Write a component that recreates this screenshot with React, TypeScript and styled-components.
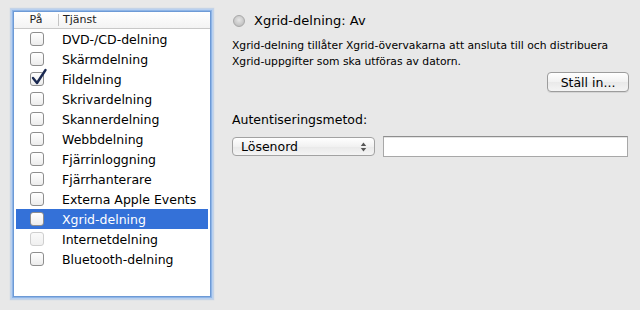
import styled, { createGlobalStyle } from 'styled-components'

type Service = {
  name: string,
  checked?: boolean,
  disabled?: boolean,
}

const services: Array<Service> = [
  { name: 'DVD-/CD-delning' },
  { name: 'Skärmdelning' },
  { name: 'Fildelning', checked: true },
  { name: 'Skrivardelning' },
  { name: 'Skannerdelning' },
  { name: 'Webbdelning' },
  { name: 'Fjärrinloggning' },
  { name: 'Fjärrhanterare' },
  { name: 'Externa Apple Events' },
  { name: 'Xgrid-delning' },
  { name: 'Internetdelning', disabled: true },
  { name: 'Bluetooth-delning' },
]

const selectedIndex = 9

const GlobalStyle = createGlobalStyle`
  html, body {
    margin: 0;
    padding: 0;
    background: #e8e8e8;
    font-family: "DejaVu Sans", "Liberation Sans", sans-serif;
    color: #000;
  }
`

const Check = ({ checked, disabled }: { checked?: boolean, disabled?: boolean }) => (
  <CheckBox $disabled={disabled}>
    {checked && (
      <svg width="18" height="19" viewBox="0 0 18 19">
        <path d="M3 10 L7 15 L15.5 2" fill="none" stroke="#1b2a52" strokeWidth="2.4" strokeLinecap="round" strokeLinejoin="round" />
      </svg>
    )}
  </CheckBox>
)

export default function App() {
  return (
    <>
      <GlobalStyle />
      <Page>
        <ListBox>
          <Header>
            <HeaderCell $width={44} $center>På</HeaderCell>
            <HeaderCell>Tjänst</HeaderCell>
          </Header>
          {services.map(({ name, checked, disabled }, i) => (
            <Row key={name} $selected={i === selectedIndex}>
              <CheckCell>
                <Check checked={checked} disabled={disabled} />
              </CheckCell>
              <Name>{name}</Name>
            </Row>
          ))}
        </ListBox>

        <Detail>
          <StatusLine>
            <StatusDot />
            <StatusText>Xgrid-delning: Av</StatusText>
          </StatusLine>

          <Description>
            Xgrid-delning tillåter Xgrid-övervakarna att ansluta till och distribuera
            <br />
            Xgrid-uppgifter som ska utföras av datorn.
          </Description>

          <ButtonRow>
            <PushButton>Ställ in...</PushButton>
          </ButtonRow>

          <Label>Autentiseringsmetod:</Label>
          <AuthRow>
            <Popup>
              <span>Lösenord</span>
              <svg width="7" height="10" viewBox="0 0 7 10">
                <path d="M3.5 0.5 L6.2 4 L0.8 4 Z" fill="#555" />
                <path d="M3.5 9.5 L6.2 6 L0.8 6 Z" fill="#555" />
              </svg>
            </Popup>
            <TextField />
          </AuthRow>
        </Detail>
      </Page>
    </>
  )
}

const Page = styled.div`
  display: flex;
  width: 640px;
  height: 310px;
  padding: 11px 0 0 13px;
  box-sizing: border-box;
  gap: 21px;
`

const ListBox = styled.div`
  width: 198px;
  height: 286px;
  background: #fff;
  border: 1px solid #6d9ad6;
  box-shadow: 0 0 0 1px #8fb5e6, 0 0 0 2px #b8d0f0, 0 0 1px 3px rgba(160, 190, 230, 0.5);
  box-sizing: border-box;
  overflow: hidden;
`

const Header = styled.div`
  display: flex;
  height: 16px;
  align-items: center;
  background: linear-gradient(#ffffff, #f3f3f3);
  border-bottom: 1px solid #c8c8c8;
  font-size: 11px;
  color: #222;
`

const HeaderCell = styled.div<{ $width?: number, $center?: boolean }>`
  ${({ $width }) => ($width ? `width: ${$width}px;` : 'flex: 1;')}
  ${({ $center }) => ($center ? 'text-align: center; border-right: 1px solid #c4c4c4;' : 'padding-left: 4px;')}
  line-height: 12px;
`

const Row = styled.div<{ $selected?: boolean }>`
  display: flex;
  align-items: center;
  height: 20px;
  margin: 0 2px;
  background: ${({ $selected }) => ($selected ? '#3471d8' : 'transparent')};
  color: ${({ $selected }) => ($selected ? '#fff' : '#000')};
`

const CheckCell = styled.div`
  width: 44px;
  display: flex;
  justify-content: center;
  padding-right: 2px;
  box-sizing: border-box;
`

const CheckBox = styled.div<{ $disabled?: boolean }>`
  position: relative;
  width: 14px;
  height: 14px;
  box-sizing: border-box;
  border-radius: 3px;
  border: 1px solid ${({ $disabled }) => ($disabled ? '#cfcfcf' : '#8e8e8e')};
  background: ${({ $disabled }) => ($disabled ? 'linear-gradient(#fafafa, #f0f0f0)' : 'linear-gradient(#ffffff, #ececec)')};

  svg {
    position: absolute;
    left: -1px;
    top: -5px;
  }
`

const Name = styled.div`
  padding-left: 2px;
  font-size: 12.5px;
`

const Detail = styled.div`
  display: flex;
  flex-direction: column;
  width: 397px;
  padding-top: 2px;
`

const StatusLine = styled.div`
  display: flex;
  align-items: center;
  gap: 9px;
  padding-left: 1px;
`

const StatusDot = styled.div`
  width: 10px;
  height: 10px;
  border-radius: 50%;
  border: 1px solid #a8a8a8;
  background: radial-gradient(circle at 50% 40%, #e6e6e6, #b4b4b4);
`

const StatusText = styled.div`
  font-size: 13px;
`

const Description = styled.div`
  margin-top: 10px;
  font-size: 10.75px;
  line-height: 16px;
`

const ButtonRow = styled.div`
  display: flex;
  justify-content: flex-end;
  margin-top: 2px;
`

const PushButton = styled.div`
  width: 82px;
  height: 20px;
  box-sizing: border-box;
  border: 1px solid #9c9c9c;
  border-radius: 4px;
  background: linear-gradient(#ffffff, #f1f1f1 50%, #e9e9e9 51%, #f4f4f4);
  box-shadow: 0 1px 0 rgba(0, 0, 0, 0.08);
  font-size: 12.5px;
  display: flex;
  align-items: center;
  justify-content: center;
`

const Label = styled.div`
  margin-top: 20px;
  font-size: 12.5px;
`

const AuthRow = styled.div`
  display: flex;
  align-items: center;
  gap: 8px;
  margin-top: 9px;
`

const Popup = styled.div`
  width: 143px;
  height: 19px;
  box-sizing: border-box;
  border: 1px solid #a2a2a2;
  border-radius: 4px;
  background: linear-gradient(#ffffff, #f1f1f1 50%, #e9e9e9 51%, #f4f4f4);
  display: flex;
  align-items: center;
  justify-content: space-between;
  padding: 0 7px 0 8px;
  font-size: 12.5px;
`

const TextField = styled.div`
  width: 245px;
  height: 21px;
  box-sizing: border-box;
  background: #fff;
  border: 1px solid #a8a8a8;
  border-top-color: #8e8e8e;
  box-shadow: inset 0 1px 0 #e4e4e4;
`
